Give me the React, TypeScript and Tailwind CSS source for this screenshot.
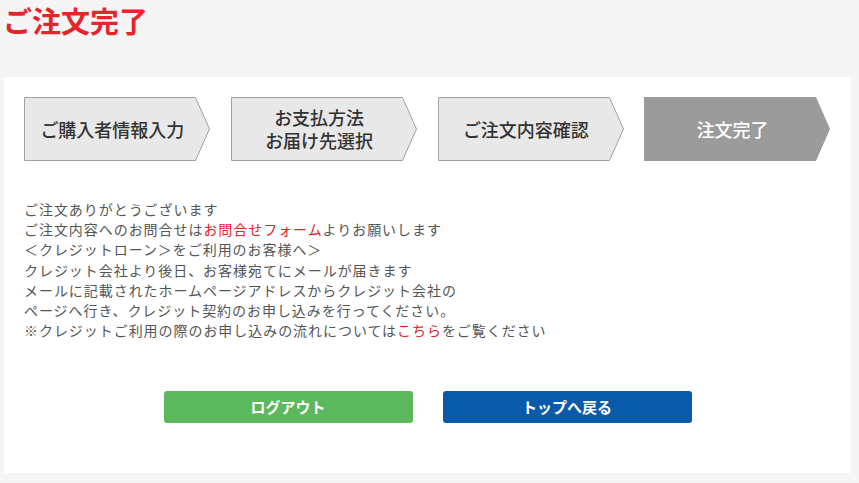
const steps = [
  { lines: ['ご購入者情報入力'], active: false },
  { lines: ['お支払方法', 'お届け先選択'], active: false },
  { lines: ['ご注文内容確認'], active: false },
  { lines: ['注文完了'], active: true },
]

function Step({ lines, active }: { lines: string[]; active: boolean }) {
  return (
    <div className="relative w-[187px] h-[64px] flex items-center justify-center">
      <svg className="absolute inset-0" width="187" height="64" viewBox="0 0 187 64">
        {active ? (
          <polygon points="0,0 172,0 186,32 172,64 0,64" fill="#9b9b9b" />
        ) : (
          <polygon points="0.5,0.5 171.5,0.5 185.5,32 171.5,63.5 0.5,63.5" fill="#e8e8e8" stroke="#a0a0a0" strokeWidth="1" />
        )}
      </svg>
      <p
        className={`relative pr-[10px] text-[18px] leading-[23px] text-center font-medium ${active ? 'text-white' : 'text-[#333]'}`}
      >
        {lines.map((l, i) => (
          <span key={l}>
            {i > 0 && <br />}
            {l}
          </span>
        ))}
      </p>
    </div>
  )
}

export default function App() {
  return (
    <div className="w-[859px] h-[483px] bg-[#f5f5f5] font-['Noto_Sans_CJK_JP',sans-serif] overflow-hidden">
      <h1 className="pl-[3px] h-[77px] text-[29px] leading-[40px] font-bold text-[#e4262c]">ご注文完了</h1>

      <div className="ml-[4px] w-[847px] h-[396px] bg-white pt-[20px] px-[20px]">
        <div className="flex gap-[20px]">
          {steps.map((s, i) => (
            <Step key={i} lines={s.lines} active={s.active} />
          ))}
        </div>

        <div className="mt-[38px] text-[14px] leading-[20.2px] tracking-[0.95px] text-[#555]">
          <p>ご注文ありがとうございます</p>
          <p>
            ご注文内容へのお問合せは<span className="text-[#e8202a]">お問合せフォーム</span>よりお願いします
          </p>
          <p>＜クレジットローン＞をご利用のお客様へ＞</p>
          <p>クレジット会社より後日、お客様宛てにメールが届きます</p>
          <p>メールに記載されたホームページアドレスからクレジット会社の</p>
          <p>ページへ行き、クレジット契約のお申し込みを行ってください。</p>
          <p>
            ※クレジットご利用の際のお申し込みの流れについては<span className="text-[#e8202a]">こちら</span>をご覧ください
          </p>
        </div>

        <div className="mt-[51px] flex justify-center gap-[30px]">
          <button className="w-[249px] h-[32px] rounded-[3px] bg-[#5cb85c] text-white text-[15px] font-bold">ログアウト</button>
          <button className="w-[249px] h-[32px] rounded-[3px] bg-[#0a5aab] text-white text-[15px] font-bold">トップへ戻る</button>
        </div>
      </div>
    </div>
  )
}
